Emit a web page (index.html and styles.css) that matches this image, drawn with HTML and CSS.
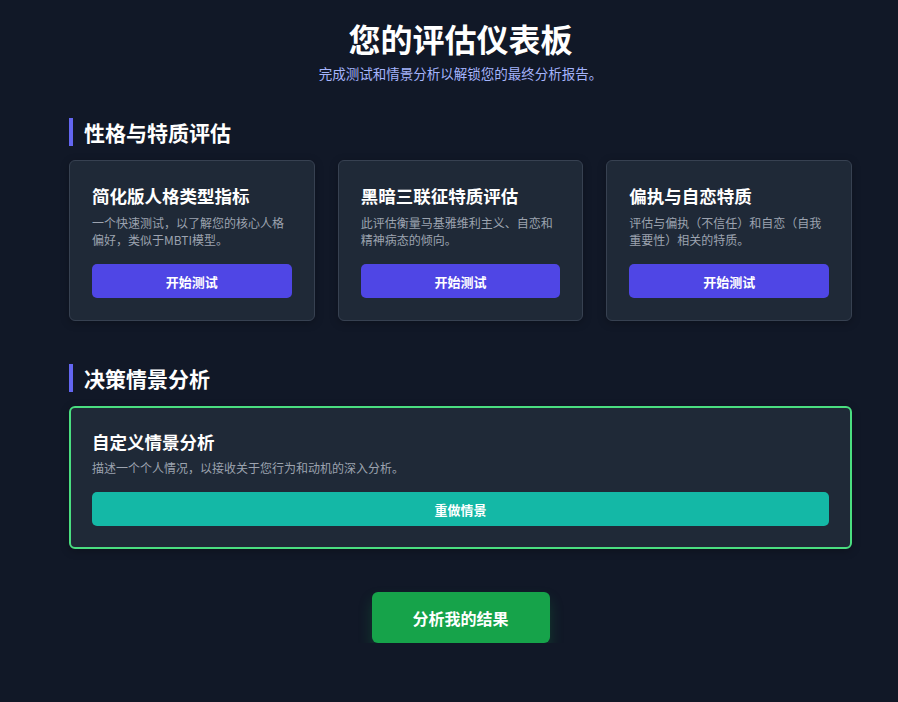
FILE: index.html
```html
<!DOCTYPE html>
<html lang="zh-CN">
<head>
    <meta charset="UTF-8">
    <title>您的评估仪表板</title>
    <link rel="stylesheet" href="styles.css">
</head>
<body>
    <div class="page">
        <header class="page-head">
            <h1>您的评估仪表板</h1>
            <p>完成测试和情景分析以解锁您的最终分析报告。</p>
        </header>

        <section class="section">
            <h2 class="section-title">性格与特质评估</h2>
            <div class="card-grid">
                <div class="card">
                    <h3>简化版人格类型指标</h3>
                    <p>一个快速测试，以了解您的核心人格偏好，类似于MBTI模型。</p>
                    <button class="btn btn-indigo">开始测试</button>
                </div>
                <div class="card">
                    <h3>黑暗三联征特质评估</h3>
                    <p>此评估衡量马基雅维利主义、自恋和精神病态的倾向。</p>
                    <button class="btn btn-indigo">开始测试</button>
                </div>
                <div class="card">
                    <h3>偏执与自恋特质</h3>
                    <p>评估与偏执（不信任）和自恋（自我重要性）相关的特质。</p>
                    <button class="btn btn-indigo">开始测试</button>
                </div>
            </div>
        </section>

        <section class="section">
            <h2 class="section-title">决策情景分析</h2>
            <div class="card card-done">
                <h3>自定义情景分析</h3>
                <p>描述一个个人情况，以接收关于您行为和动机的深入分析。</p>
                <button class="btn btn-teal">重做情景</button>
            </div>
        </section>

        <div class="final">
            <button class="btn-final">分析我的结果</button>
        </div>
    </div>
</body>
</html>
```

FILE: styles.css
```css
body {
    margin: 0;
    background-color: #111827;
    color: #f9fafb;
    font-family: "Noto Sans CJK SC", "Noto Sans", sans-serif;
}

.page {
    width: 783px;
    margin-left: 69px;
    padding-top: 17px;
}

.page-head { text-align: center; }

.page-head h1 {
    margin: 0;
    font-size: 32px;
    line-height: 42px;
    font-weight: 700;
    color: #ffffff;
}

.page-head p {
    margin: 5px 0 0;
    font-size: 13.5px;
    line-height: 18px;
    color: #a5b4fc;
}

.section { margin-top: 36px; }
.section + .section { margin-top: 43px; }

.section-title {
    margin: 0 0 14px;
    padding-left: 11px;
    border-left: 4px solid #6366f1;
    font-size: 21px;
    line-height: 28px;
    font-weight: 700;
    color: #ffffff;
}

.card-grid {
    display: grid;
    grid-template-columns: repeat(3, 1fr);
    gap: 23px;
}

.card {
    background-color: #1f2937;
    border: 1px solid #374151;
    border-radius: 6px;
    padding: 22px;
    box-shadow: 0 2px 8px rgba(0, 0, 0, 0.25);
}

.card h3 {
    margin: 0;
    font-size: 17.5px;
    line-height: 25px;
    font-weight: 700;
    color: #ffffff;
}

.card p {
    margin: 6px 0 0;
    font-size: 12px;
    line-height: 17px;
    color: #9ca3af;
}

.card-done {
    border: 2px solid #4ade80;
    padding: 21px;
}

.card-done p { margin-top: 5px; }

.btn {
    display: block;
    width: 100%;
    height: 34px;
    margin-top: 16px;
    border: 0;
    border-radius: 5px;
    font-family: inherit;
    font-size: 13px;
    font-weight: 700;
    color: #ffffff;
}

.btn-indigo { background-color: #4f46e5; }
.btn-teal { background-color: #14b8a6; }

.final {
    display: flex;
    justify-content: center;
    margin-top: 43px;
}

.btn-final {
    width: 178px;
    height: 51px;
    border: 0;
    border-radius: 6px;
    background-color: #16a34a;
    color: #ffffff;
    font-family: inherit;
    font-size: 16px;
    font-weight: 700;
    box-shadow: 0 8px 14px rgba(22, 163, 74, 0.25);
}
```
